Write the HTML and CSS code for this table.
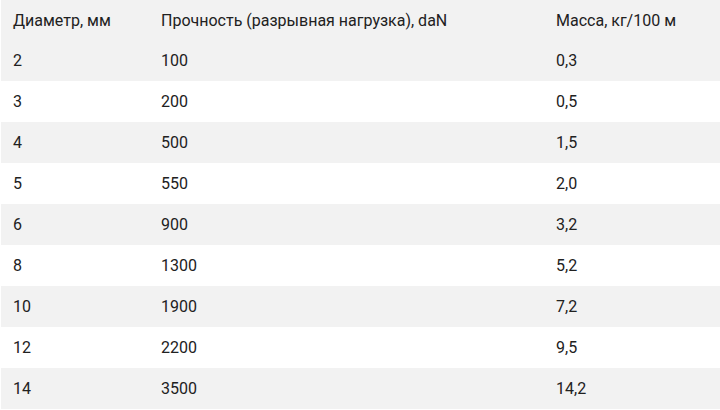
FILE: index.html
```html
<!DOCTYPE html>
<html lang="ru">
<head>
<meta charset="utf-8">
<link rel="stylesheet" href="styles.css">
</head>
<body>
<div class="wrap">
<table class="spec">
<colgroup><col class="c1"><col class="c2"><col class="c3"></colgroup>
<thead>
<tr><th>Диаметр, мм</th><th>Прочность (разрывная нагрузка), daN</th><th>Масса, кг/100 м</th></tr>
</thead>
<tbody>
<tr><td>2</td><td>100</td><td>0,3</td></tr>
<tr><td>3</td><td>200</td><td>0,5</td></tr>
<tr><td>4</td><td>500</td><td>1,5</td></tr>
<tr><td>5</td><td>550</td><td>2,0</td></tr>
<tr><td>6</td><td>900</td><td>3,2</td></tr>
<tr><td>8</td><td>1300</td><td>5,2</td></tr>
<tr><td>10</td><td>1900</td><td>7,2</td></tr>
<tr><td>12</td><td>2200</td><td>9,5</td></tr>
<tr><td>14</td><td>3500</td><td>14,2</td></tr>
</tbody>
</table>
</div>
</body>
</html>
```
FILE: styles.css
```css
html, body { margin: 0; padding: 0; background: #fff; }
.wrap { padding-left: 1px; }
.spec {
  width: 719px;
  border-collapse: collapse;
  table-layout: fixed;
  font-family: Roboto, "Liberation Sans", sans-serif;
  font-size: 16px;
  color: #212121;
}
.c1 { width: 148px; }
.c2 { width: 395px; }
.c3 { width: 176px; }
.spec th, .spec td {
  text-align: left;
  font-weight: 400;
  padding: 0 0 0 12px;
  vertical-align: middle;
  white-space: nowrap;
}
.spec thead tr { height: 40px; background: #f2f2f2; }
.spec tbody tr { height: 41px; }
.spec tbody tr:nth-child(odd) { background: #f2f2f2; }
```
